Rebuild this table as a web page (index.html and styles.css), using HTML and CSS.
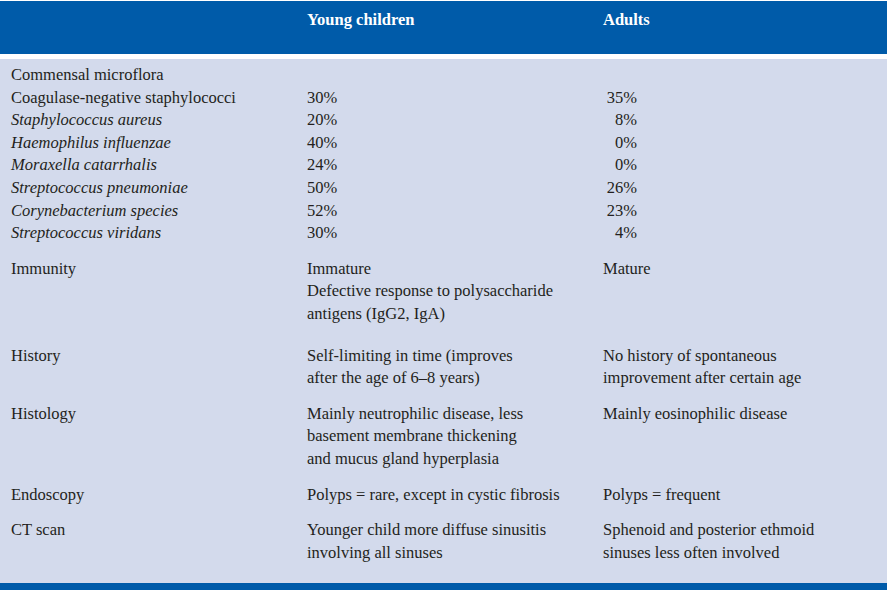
FILE: index.html
```html
<!DOCTYPE html>
<html>
<head>
<meta charset="utf-8">
<link rel="stylesheet" href="styles.css">
</head>
<body>
<div class="table">
  <div class="head">
    <div class="cell"></div>
    <div class="cell">Young children</div>
    <div class="cell">Adults</div>
  </div>
  <div class="body">
    <div class="group first">
      <div class="cell">Commensal microflora</div><div class="cell"></div><div class="cell"></div>
      <div class="cell">Coagulase-negative staphylococci</div><div class="cell">30%</div><div class="cell"><span class="pct">35%</span></div>
      <div class="cell"><i>Staphylococcus aureus</i></div><div class="cell">20%</div><div class="cell"><span class="pct">8%</span></div>
      <div class="cell"><i>Haemophilus influenzae</i></div><div class="cell">40%</div><div class="cell"><span class="pct">0%</span></div>
      <div class="cell"><i>Moraxella catarrhalis</i></div><div class="cell">24%</div><div class="cell"><span class="pct">0%</span></div>
      <div class="cell"><i>Streptococcus pneumoniae</i></div><div class="cell">50%</div><div class="cell"><span class="pct">26%</span></div>
      <div class="cell"><i>Corynebacterium species</i></div><div class="cell">52%</div><div class="cell"><span class="pct">23%</span></div>
      <div class="cell"><i>Streptococcus viridans</i></div><div class="cell">30%</div><div class="cell"><span class="pct">4%</span></div>
    </div>
    <div class="group">
      <div class="cell">Immunity</div>
      <div class="cell">Immature<br>Defective response to polysaccharide<br>antigens (IgG2, IgA)</div>
      <div class="cell">Mature</div>
    </div>
    <div class="group wide">
      <div class="cell">History</div>
      <div class="cell">Self-limiting in time (improves<br>after the age of 6–8 years)</div>
      <div class="cell">No history of spontaneous<br>improvement after certain age</div>
    </div>
    <div class="group">
      <div class="cell">Histology</div>
      <div class="cell">Mainly neutrophilic disease, less<br>basement membrane thickening<br>and mucus gland hyperplasia</div>
      <div class="cell">Mainly eosinophilic disease</div>
    </div>
    <div class="group">
      <div class="cell">Endoscopy</div>
      <div class="cell">Polyps = rare, except in cystic fibrosis</div>
      <div class="cell">Polyps = frequent</div>
    </div>
    <div class="group">
      <div class="cell">CT scan</div>
      <div class="cell">Younger child more diffuse sinusitis<br>involving all sinuses</div>
      <div class="cell">Sphenoid and posterior ethmoid<br>sinuses less often involved</div>
    </div>
  </div>
  <div class="foot"></div>
</div>
</body>
</html>
```
FILE: styles.css
```css
html, body {
  margin: 0;
  padding: 0;
  background: #ffffff;
}
.table {
  width: 887px;
  font-family: "Liberation Serif", "Times New Roman", serif;
  font-size: 16.5px;
  line-height: 22.6px;
  color: #231f20;
  padding-top: 1px;
}
.head, .group {
  display: grid;
  grid-template-columns: 296px 296px 1fr;
}
.head {
  background: #005ba9;
  color: #ffffff;
  font-weight: bold;
  height: 45px;
  padding: 8px 0 0 11px;
  margin-bottom: 5px;
}
.body {
  background: #d3daec;
  padding: 5px 0 19px 11px;
}
.group {
  margin-top: 13px;
}
.group.first {
  margin-top: 0;
}
.group.wide {
  margin-top: 19px;
}
.pct {
  display: inline-block;
  width: 34px;
  text-align: right;
}
.foot {
  height: 7px;
  background: #005ba9;
}
```
